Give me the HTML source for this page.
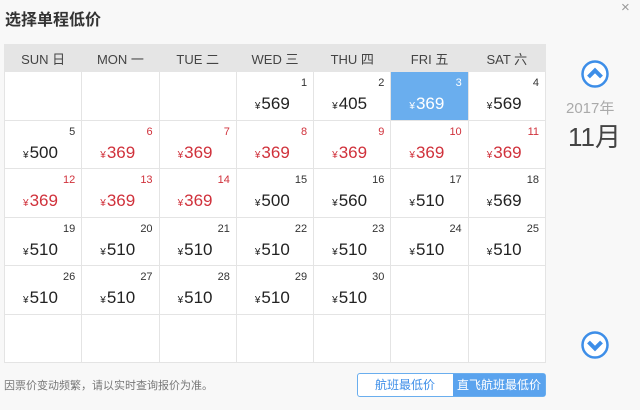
<!DOCTYPE html><html><head><meta charset="utf-8"><style>
body{margin:0;width:640px;height:410px;background:#f8f8f8;font-family:"Liberation Sans","Noto Sans CJK SC",sans-serif;position:relative;overflow:hidden}
.t{position:absolute;left:5px;top:6px;font-size:16px;font-weight:bold;color:#333}
.x{position:absolute;left:621px;top:-1px;font-size:15px;color:#999}
table{position:absolute;left:4px;top:44px;border-collapse:collapse;table-layout:fixed;width:542px}
th{background:#e5e5e5;height:26px;font-weight:normal;font-size:13px;color:#444;border:1px solid #e5e5e5;padding:0}
td{background:#fff;border:1px solid #e4e4e4;height:47.5px;padding:0;position:relative;vertical-align:top}
.d{position:absolute;right:6px;top:5px;font-size:11px;color:#333}
.p{position:absolute;left:18px;top:22px;font-size:17px;color:#222}
.p small{font-size:10px;margin-right:1px}
.r .d,.r .p{color:#d0313b}
.s{background:#6aaeee}.s .d,.s .p{color:#fff}
.yr{position:absolute;left:566px;top:97px;font-size:15px;color:#aaa}
.mo{position:absolute;left:568px;top:117px;font-size:26px;color:#444}
.f{position:absolute;left:4px;top:377px;font-size:11px;color:#777}
.b{position:absolute;left:357px;top:373px;width:187px;height:22px;border:1px solid #6aaeee;border-radius:3px;background:#fff;font-size:12px}
.b span{position:absolute;top:0;line-height:22px;text-align:center}
</style></head><body>
<div class="t">选择单程低价</div><div class="x">×</div>
<table>
<tr><th>SUN 日</th><th>MON 一</th><th>TUE 二</th><th>WED 三</th><th>THU 四</th><th>FRI 五</th><th>SAT 六</th></tr>
<tr><td></td><td></td><td></td><td><span class="d">1</span><span class="p"><small>¥</small>569</span></td><td><span class="d">2</span><span class="p"><small>¥</small>405</span></td><td class="s"><span class="d">3</span><span class="p"><small>¥</small>369</span></td><td><span class="d">4</span><span class="p"><small>¥</small>569</span></td></tr>
<tr><td><span class="d">5</span><span class="p"><small>¥</small>500</span></td><td class="r"><span class="d">6</span><span class="p"><small>¥</small>369</span></td><td class="r"><span class="d">7</span><span class="p"><small>¥</small>369</span></td><td class="r"><span class="d">8</span><span class="p"><small>¥</small>369</span></td><td class="r"><span class="d">9</span><span class="p"><small>¥</small>369</span></td><td class="r"><span class="d">10</span><span class="p"><small>¥</small>369</span></td><td class="r"><span class="d">11</span><span class="p"><small>¥</small>369</span></td></tr>
<tr><td class="r"><span class="d">12</span><span class="p"><small>¥</small>369</span></td><td class="r"><span class="d">13</span><span class="p"><small>¥</small>369</span></td><td class="r"><span class="d">14</span><span class="p"><small>¥</small>369</span></td><td><span class="d">15</span><span class="p"><small>¥</small>500</span></td><td><span class="d">16</span><span class="p"><small>¥</small>560</span></td><td><span class="d">17</span><span class="p"><small>¥</small>510</span></td><td><span class="d">18</span><span class="p"><small>¥</small>569</span></td></tr>
<tr><td><span class="d">19</span><span class="p"><small>¥</small>510</span></td><td><span class="d">20</span><span class="p"><small>¥</small>510</span></td><td><span class="d">21</span><span class="p"><small>¥</small>510</span></td><td><span class="d">22</span><span class="p"><small>¥</small>510</span></td><td><span class="d">23</span><span class="p"><small>¥</small>510</span></td><td><span class="d">24</span><span class="p"><small>¥</small>510</span></td><td><span class="d">25</span><span class="p"><small>¥</small>510</span></td></tr>
<tr><td><span class="d">26</span><span class="p"><small>¥</small>510</span></td><td><span class="d">27</span><span class="p"><small>¥</small>510</span></td><td><span class="d">28</span><span class="p"><small>¥</small>510</span></td><td><span class="d">29</span><span class="p"><small>¥</small>510</span></td><td><span class="d">30</span><span class="p"><small>¥</small>510</span></td><td></td><td></td></tr>
<tr><td></td><td></td><td></td><td></td><td></td><td></td><td></td></tr>
</table>
<svg style="position:absolute;left:580px;top:59px" width="30" height="30"><circle cx="15" cy="15" r="12.5" fill="#fff" stroke="#3d8ee8" stroke-width="2.5"/><path d="M8.5 18 L15 11.5 L21.5 18" fill="none" stroke="#3d8ee8" stroke-width="4"/></svg>
<div class="yr">2017年</div><div class="mo">11月</div>
<svg style="position:absolute;left:580px;top:330px" width="30" height="30"><circle cx="15" cy="15" r="12.5" fill="#fff" stroke="#3d8ee8" stroke-width="2.5"/><path d="M8.5 12 L15 18.5 L21.5 12" fill="none" stroke="#3d8ee8" stroke-width="4"/></svg>
<div class="f">因票价变动频繁，请以实时查询报价为准。</div>
<div class="b"><span style="left:0;width:94px;color:#3d8ee8">航班最低价</span><span style="left:95px;width:92px;background:#5aa3ee;color:#fff">直飞航班最低价</span></div>
</body></html>
